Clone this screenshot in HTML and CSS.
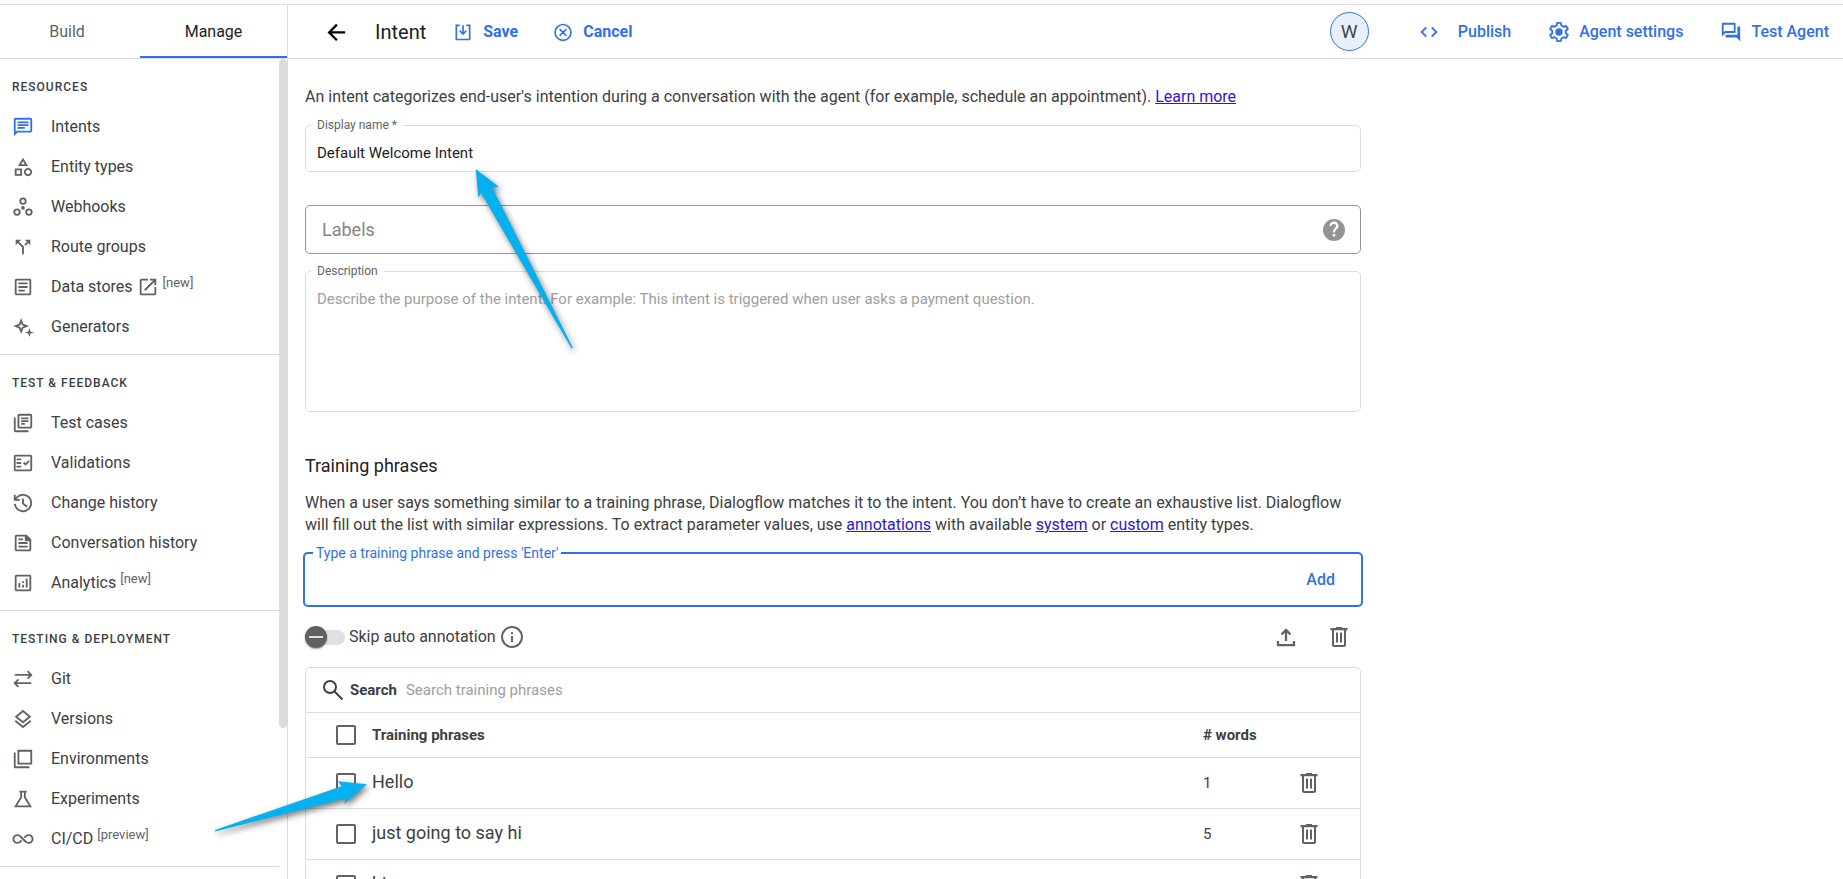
FILE: index.html
```html
<!DOCTYPE html>
<html lang="en">
  <head>
    <meta charset="UTF-8" />
    <meta name="viewport" content="width=device-width, initial-scale=1.0" />
    <title>Intent</title>
    <link rel="stylesheet" href="styles.css">
  </head>
  <body>
    <svg class="sprite" aria-hidden="true">
      <symbol id="trash" viewBox="0 0 24 24">
        <path d="M15 3V2H9v1H3.500v2.300H5V20c0 1.100.9 2 2 2h10c1.100 0 2-.9 2-2V5.300h1.500V3H15zm2 17H7V5.300h10V20zM9 7.500h2v10H9zm4 0h2v10h-2z" />
      </symbol>
    </svg>

    <aside class="sidebar">
      <nav class="tabs">
        <a href="#build" class="tabs__item">Build</a>
        <a href="#manage" class="tabs__item tabs__item--active">Manage</a>
      </nav>
      <div class="sidebar__body">
        <nav class="menu">
          <section class="menu__section">
            <h2 class="menu__title">Resources</h2>
            <a href="#intents" class="menu__item menu__item--active">
              <svg class="icon" viewBox="0 0 24 24"><path d="M4 4h16v12H5.170L4 17.170V4m0-2c-1.100 0-1.990.9-1.990 2L2 22l4-4h14c1.100 0 2-.9 2-2V4c0-1.100-.9-2-2-2H4zm2 10h8v2H6v-2zm0-3h12v2H6V9zm0-3h12v2H6V6z" /></svg>
              <span>Intents</span>
            </a>
            <a href="#entities" class="menu__item">
              <svg class="icon" viewBox="0 0 24 24"><path d="M12 2l-5.500 9h11L12 2zm0 3.840L13.930 9h-3.870L12 5.840zM17.500 13c-2.490 0-4.500 2.010-4.500 4.500s2.010 4.500 4.500 4.500 4.500-2.010 4.500-4.500-2.010-4.500-4.500-4.500zm0 7c-1.380 0-2.500-1.120-2.500-2.500s1.120-2.500 2.500-2.500 2.500 1.120 2.500 2.500-1.120 2.500-2.500 2.500zM3 21.500h8v-8H3v8zm2-6h4v4H5v-4z" /></svg>
              <span>Entity types</span>
            </a>
            <a href="#webhooks" class="menu__item">
              <svg class="icon" viewBox="0 0 24 24"><g fill="none" stroke="currentColor" stroke-width="2"><circle cx="12" cy="5.500" r="3" /><circle cx="5.500" cy="17.500" r="3" /><circle cx="18.500" cy="17.500" r="3" /></g><circle cx="12" cy="13" r="2" /></svg>
              <span>Webhooks</span>
            </a>
            <a href="#routes" class="menu__item">
              <svg class="icon" viewBox="0 0 24 24"><path d="M14 4l2.290 2.290-2.880 2.880 1.420 1.420 2.880-2.880L20 10V4zM10 4H4v6l2.290-2.290 4.710 4.700V20h2v-8.410l-5.290-5.300z" /></svg>
              <span>Route groups</span>
            </a>
            <a href="#stores" class="menu__item">
              <svg class="icon" viewBox="0 0 24 24"><path d="M19 5v14H5V5h14m0-2H5c-1.100 0-2 .9-2 2v14c0 1.100.9 2 2 2h14c1.100 0 2-.9 2-2V5c0-1.100-.9-2-2-2zM14 17H7v-2h7v2zm3-4H7v-2h10v2zm0-4H7V7h10v2z" /></svg>
              <span>Data stores</span>
              <svg class="icon icon--link" viewBox="0 0 24 24"><path d="M19 19H5V5h7V3H5c-1.110 0-2 .9-2 2v14c0 1.100.89 2 2 2h14c1.100 0 2-.9 2-2v-7h-2v7zM14 3v2h3.590l-9.830 9.830 1.410 1.410L19 6.410V10h2V3h-7z" /></svg>
              <small class="menu__tag">[new]</small>
            </a>
            <a href="#generators" class="menu__item">
              <svg class="icon" viewBox="0 0 24 24"><path fill="none" stroke="currentColor" stroke-width="2" stroke-linejoin="miter" d="M10 5l1.700 4.300L16 11l-4.300 1.700L10 17l-1.700-4.300L4 11l4.300-1.700z" /><path d="M19 13l1.200 3.800L24 18l-3.800 1.200L19 23l-1.200-3.800L14 18l3.800-1.200z" /></svg>
              <span>Generators</span>
            </a>
          </section>

          <section class="menu__section">
            <h2 class="menu__title">Test &amp; Feedback</h2>
            <a href="#tests" class="menu__item">
              <svg class="icon" viewBox="0 0 24 24"><path d="M4 6H2v14c0 1.100.9 2 2 2h14v-2H4V6zm16-4H8c-1.100 0-2 .9-2 2v12c0 1.100.9 2 2 2h12c1.100 0 2-.9 2-2V4c0-1.100-.9-2-2-2zm0 14H8V4h12v12zM10 9h8v2h-8zm0 3h4v2h-4zm0-6h8v2h-8z" /></svg>
              <span>Test cases</span>
            </a>
            <a href="#validations" class="menu__item">
              <svg class="icon" viewBox="0 0 24 24"><path d="M20 3H4c-1.100 0-2 .9-2 2v14c0 1.100.9 2 2 2h16c1.100 0 2-.9 2-2V5c0-1.100-.9-2-2-2zm0 16H4V5h16v14zM19.410 10.420L17.990 9l-3.170 3.170-1.410-1.420L12 12.160 14.820 15zM5 7h5v2H5zm0 4h5v2H5zm0 4h5v2H5z" /></svg>
              <span>Validations</span>
            </a>
            <a href="#changes" class="menu__item">
              <svg class="icon" viewBox="0 0 24 24"><path fill="none" stroke="currentColor" stroke-width="2" d="M3 13a9 9 0 1 0 2.600-7.400L3 8.200M3 3v5.500h5.500M12 7v5.500l4.500 3.500" /></svg>
              <span>Change history</span>
            </a>
            <a href="#conversations" class="menu__item">
              <svg class="icon" viewBox="0 0 24 24"><path d="M16 3H5c-1.100 0-2 .9-2 2v14c0 1.100.9 2 2 2h14c1.100 0 2-.9 2-2V8l-5-5zm3 16H5V5h9v5h5v9zM7 17h10v-2H7v2zm5-10H7v2h5V7zm-5 6h10v-2H7v2z" /></svg>
              <span>Conversation history</span>
            </a>
            <a href="#analytics" class="menu__item">
              <svg class="icon" viewBox="0 0 24 24"><path d="M19 3H5c-1.100 0-2 .9-2 2v14c0 1.100.9 2 2 2h14c1.100 0 2-.9 2-2V5c0-1.100-.9-2-2-2zm0 16H5V5h14v14zM7 12h2v5H7zm8-5h2v10h-2zm-4 7h2v3h-2zm0-4h2v2h-2z" /></svg>
              <span>Analytics</span>
              <small class="menu__tag">[new]</small>
            </a>
          </section>

          <section class="menu__section">
            <h2 class="menu__title">Testing &amp; Deployment</h2>
            <a href="#git" class="menu__item">
              <svg class="icon" viewBox="0 0 24 24"><path fill="none" stroke="currentColor" stroke-width="2" d="M3 7.500h18M17 3.500l4 4-4 4M21 16.500H3M7 12.500l-4 4 4 4" /></svg>
              <span>Git</span>
            </a>
            <a href="#versions" class="menu__item">
              <svg class="icon" viewBox="0 0 24 24"><path fill="none" stroke="currentColor" stroke-width="2" d="M12 3.300L19.500 9.500 12 15.500 4.500 9.500zM3.500 14l8.500 6.700 8.500-6.700" /></svg>
              <span>Versions</span>
            </a>
            <a href="#environments" class="menu__item">
              <svg class="icon" viewBox="0 0 24 24"><path fill="none" stroke="currentColor" stroke-width="2" d="M7 3h14v14H7zM3 5v16h16" /></svg>
              <span>Environments</span>
            </a>
            <a href="#experiments" class="menu__item">
              <svg class="icon" viewBox="0 0 24 24"><path fill="none" stroke="currentColor" stroke-width="2" d="M8 4h8M10 4v6l-6 10h16l-6-10V4" /></svg>
              <span>Experiments</span>
            </a>
            <a href="#cicd" class="menu__item">
              <svg class="icon" viewBox="0 0 24 24"><path fill="none" stroke="currentColor" stroke-width="2" d="M10.500 13.500l-1.300 1.200a4.300 4.300 0 1 1 0-5.400l5.600 5.400a4.300 4.300 0 1 0 0-5.400l-1.300 1.200" /></svg>
              <span>CI/CD</span>
              <small class="menu__tag">[preview]</small>
            </a>
          </section>
        </nav>
        <div class="scrollbar"></div>
      </div>
    </aside>

    <div class="page">
      <header class="toolbar">
        <button type="button" class="toolbar__back" aria-label="Back">
          <svg class="icon" viewBox="0 0 24 24"><path fill="none" stroke="currentColor" stroke-width="2.500" d="M22 12.500H5M13 4l-8.500 8.500L13 21" /></svg>
        </button>
        <h1 class="toolbar__title">Intent</h1>
        <button type="button" class="action action--strong">
          <svg class="icon" viewBox="0 0 24 24"><path fill="none" stroke="currentColor" stroke-width="2" d="M8 4H4v17h16V4h-4M12 4v10M8 10.500l4 4 4-4" /></svg>
          Save
        </button>
        <button type="button" class="action action--strong action--cancel">
          <svg class="icon" viewBox="0 0 24 24"><path fill="none" stroke="currentColor" stroke-width="2" d="M12 3a9.500 9.500 0 1 0 0 19 9.500 9.500 0 0 0 0-19zM8 8.500l8 8M16 8.500l-8 8" /></svg>
          Cancel
        </button>
        <span class="avatar">W</span>
        <div class="toolbar__links">
          <button type="button" class="action action--publish">
            <svg class="icon" viewBox="0 0 24 24"><path fill="none" stroke="currentColor" stroke-width="2" d="M9 7l-5 5 5 5M15 7l5 5-5 5" /></svg>
            Publish
          </button>
          <button type="button" class="action">
            <svg class="icon" viewBox="0 0 24 24"><path fill="none" stroke="currentColor" stroke-width="2" stroke-linejoin="round" d="M10 2h4l.6 3 2.200 1.300 2.900-1 2 3.400L19.400 10.700v2.600l2.300 2-2 3.400-2.900-1L14.600 19l-.6 3h-4l-.6-3-2.200-1.300-2.900 1-2-3.400 2.300-2v-2.600l-2.300-2 2-3.400 2.900 1L9.400 5z" /><circle cx="12" cy="12" r="4" /></svg>
            Agent settings
          </button>
          <button type="button" class="action">
            <svg class="icon" viewBox="0 0 24 24"><path d="M15 4v7H5.170L4 12.170V4h11m1-2H3c-.55 0-1 .45-1 1v14l4-4h10c.55 0 1-.45 1-1V3c0-.55-.45-1-1-1zm5 4h-2v9H6v2c0 .55.45 1 1 1h11l4 4V7c0-.55-.45-1-1-1z" /></svg>
            Test Agent
          </button>
        </div>
      </header>

      <main class="content">
        <p class="text">
          An intent categorizes end-user's intention during a conversation with the agent (for example, schedule an appointment). <a href="#learn">Learn more</a>
        </p>

        <div class="field">
          <label class="field__label" for="name">Display name *</label>
          <input class="field__input" type="text" id="name" value="Default Welcome Intent" />
        </div>

        <div class="labels">
          <input class="labels__input" type="text" placeholder="Labels" aria-label="Labels" />
          <svg class="labels__help" viewBox="0 0 24 24"><path d="M12 1a11 11 0 1 0 0 22 11 11 0 0 0 0-22zm1.200 17.500h-2.400v-2.400h2.400zm2.300-8l-1.100 1.100c-.8.800-1.200 1.400-1.200 2.900h-2.400v-.6c0-1.200.5-2.200 1.200-3l1.400-1.400a2.100 2.100 0 1 0-3.600-1.500H7.500a4.500 4.500 0 0 1 9 0c0 1-.4 1.900-1 2.500z" /></svg>
        </div>

        <div class="field">
          <label class="field__label" for="description">Description</label>
          <textarea class="field__input field__input--area" id="description" placeholder="Describe the purpose of the intent. For example: This intent is triggered when user asks a payment question."></textarea>
        </div>

        <h2 class="heading">Training phrases</h2>
        <p class="text">
          When a user says something similar to a training phrase, Dialogflow matches it to the intent. You don’t have to create an exhaustive list. Dialogflow will fill out the list with similar expressions. To extract parameter values, use <a href="#annotations">annotations</a> with available <a href="#system">system</a> or <a href="#custom">custom</a> entity types.
        </p>

        <div class="phrase">
          <label class="phrase__label" for="phrase">Type a training phrase and press 'Enter'</label>
          <input class="phrase__input" type="text" id="phrase" />
          <button type="button" class="phrase__add">Add</button>
        </div>

        <div class="options">
          <input class="switch" type="checkbox" id="skip" />
          <label class="options__label" for="skip">Skip auto annotation</label>
          <svg class="options__info" viewBox="0 0 24 24"><path fill="none" stroke="currentColor" stroke-width="2" d="M12 2a10 10 0 1 0 0 20 10 10 0 0 0 0-20zM12 11v6M12 7v2" /></svg>
          <div class="options__tools">
            <button type="button" class="tool" aria-label="Upload">
              <svg viewBox="0 0 24 24"><path fill="none" stroke="currentColor" stroke-width="2.300" d="M12 16V5.500M7.500 9.500L12 5l4.500 4.500M4 16v4.200h16V16" /></svg>
            </button>
            <button type="button" class="tool" aria-label="Delete"><svg viewBox="0 0 24 24"><use href="#trash" /></svg></button>
          </div>
        </div>

        <div class="phrases">
          <div class="search">
            <svg class="search__icon" viewBox="0 0 24 24"><path fill="none" stroke="currentColor" stroke-width="2" d="M9 3a6 6 0 1 0 0 12A6 6 0 0 0 9 3zM13.500 13.500l8 8" /></svg>
            <label class="search__label" for="search">Search</label>
            <input class="search__input" type="text" id="search" placeholder="Search training phrases" />
          </div>
          <table class="table">
            <thead>
              <tr>
                <th class="table__check"><input class="check" type="checkbox" aria-label="Select all" /></th>
                <th>Training phrases</th>
                <th class="table__words"># words</th>
                <th class="table__tools"></th>
              </tr>
            </thead>
            <tbody>
              <tr>
                <td class="table__check"><input class="check" type="checkbox" aria-label="Select Hello" /></td>
                <td class="table__phrase">Hello</td>
                <td>1</td>
                <td class="table__tools"><button type="button" class="tool" aria-label="Delete"><svg viewBox="0 0 24 24"><use href="#trash" /></svg></button></td>
              </tr>
              <tr>
                <td class="table__check"><input class="check" type="checkbox" aria-label="Select just going to say hi" /></td>
                <td class="table__phrase">just going to say hi</td>
                <td>5</td>
                <td class="table__tools"><button type="button" class="tool" aria-label="Delete"><svg viewBox="0 0 24 24"><use href="#trash" /></svg></button></td>
              </tr>
              <tr>
                <td class="table__check"><input class="check" type="checkbox" aria-label="Select hi" /></td>
                <td class="table__phrase">hi</td>
                <td>1</td>
                <td class="table__tools"><button type="button" class="tool" aria-label="Delete"><svg viewBox="0 0 24 24"><use href="#trash" /></svg></button></td>
              </tr>
            </tbody>
          </table>
        </div>
      </main>
    </div>

    <svg class="arrows" aria-hidden="true">
      <path d="M475.700 169l23 17.700-6.400 1L573 348l-1.500.5L481.300 193.300l-3 4z" />
      <path d="M367 784.300l-22.700 19.400 1.400-5.400L215 831.500v-1.500l126.700-43.700-4-5z" />
    </svg>
  </body>
</html>
```

FILE: styles.css
```css
:root {
  --blue: #3071e7;
  --text: #3c4043;
  --muted: #5f6368;
  --line: #dadce0;
}
*,
*::before,
*::after {
  box-sizing: border-box;
}
body {
  display: flex;
  position: relative;
  height: 100vh;
  margin: 0;
  padding-top: 4px;
  overflow: hidden;
  color: var(--text);
  font: 15px/22px Roboto, sans-serif;
  background: white;
}
h1,
h2,
p {
  margin: 0;
}
button,
input,
textarea {
  margin: 0;
  padding: 0;
  border: 0;
  outline: 0;
  color: inherit;
  font: inherit;
  background: none;
}
button {
  cursor: pointer;
}
svg {
  fill: currentColor;
}
.sprite {
  display: none;
}
.icon {
  flex: none;
  width: 22px;
  height: 22px;
}

/* Sidebar */
.sidebar {
  display: flex;
  flex: none;
  flex-direction: column;
  width: 288px;
  border-top: 1px solid var(--line);
  border-right: 1px solid var(--line);
}
.tabs {
  display: flex;
  flex: none;
  height: 54px;
  border-bottom: 1px solid var(--line);
}
.tabs__item {
  width: 140px;
  padding-right: 6px;
  color: var(--muted);
  font-size: 16px;
  line-height: 54px;
  text-align: center;
  text-decoration: none;
}
.tabs__item--active {
  flex: 1;
  padding: 0;
  color: #202124;
  border-bottom: 2px solid var(--blue);
}
.sidebar__body {
  display: flex;
  flex: 1;
  min-height: 0;
}
.menu {
  flex: 1;
  overflow: hidden;
}
.scrollbar {
  width: 8px;
  height: 81.6%;
  border-radius: 4px;
  background: var(--line);
}
.menu__section {
  padding: 12px 0 7px;
  border-bottom: 1px solid var(--line);
}
.menu__title {
  margin-bottom: 4px;
  padding-left: 12px;
  font-size: 12px;
  font-weight: 500;
  letter-spacing: 1px;
  line-height: 32px;
  text-transform: uppercase;
}
.menu__item {
  display: flex;
  align-items: center;
  height: 40px;
  padding-left: 12px;
  color: var(--text);
  font-size: 16px;
  text-decoration: none;
}
.menu__item .icon {
  color: var(--muted);
}
.menu__item > .icon:first-child {
  margin-right: 17px;
}
.menu__item--active .icon {
  color: var(--blue);
}
.menu__item .icon--link {
  margin-left: 4px;
}
.menu__tag {
  margin-left: 4px;
  padding-bottom: 8px;
  color: var(--muted);
  font-size: 13px;
}

/* Toolbar */
.page {
  flex: 1;
  min-width: 0;
  border-top: 1px solid var(--line);
}
.toolbar {
  display: flex;
  align-items: center;
  height: 54px;
  padding: 0 14px 0 37px;
  border-bottom: 1px solid var(--line);
}
.toolbar__back {
  display: flex;
  color: black;
}
.toolbar__title {
  margin: 0 27px 0 28px;
  color: #202124;
  font-size: 20px;
  font-weight: 400;
}
.action {
  display: flex;
  align-items: center;
  gap: 9px;
  color: var(--blue);
  font-size: 16px;
  font-weight: 500;
}
.action--strong {
  gap: 10px;
  font-weight: 700;
}
.action--strong .icon {
  width: 20px;
  height: 20px;
}
.action--cancel {
  margin-left: 35px;
}
.action--publish {
  gap: 18px;
}
.avatar {
  width: 39px;
  height: 39px;
  margin-left: auto;
  border: 1px solid var(--blue);
  border-radius: 50%;
  color: #3c4a43;
  font-size: 19px;
  line-height: 38px;
  text-align: center;
  background: #e8f0fe;
}
.toolbar__links {
  display: flex;
  gap: 37px;
  margin-left: 49px;
}

/* Form */
.content {
  max-width: 1090px;
  padding: 27px 17px 0;
}
.text {
  font-size: 16px;
}
.text a {
  color: #3311dd;
}
.field {
  position: relative;
  margin-top: 17px;
}
.field__label {
  position: absolute;
  top: -10px;
  left: 6px;
  padding: 0 6px;
  color: var(--muted);
  font-size: 12px;
  line-height: 20px;
  background: white;
}
.field__input {
  display: block;
  width: 100%;
  height: 47px;
  padding: 8px 11px 0;
  border: 1px solid var(--line);
  border-radius: 5px;
  color: #202124;
}
.field__input--area {
  height: 141px;
  padding-top: 16px;
  resize: none;
}
::placeholder {
  color: #9e9e9e;
  opacity: 1;
}
.labels {
  display: flex;
  align-items: center;
  height: 49px;
  margin-top: 33px;
  padding: 0 14px 0 16px;
  border: 1px solid #949494;
  border-radius: 5px;
}
.labels__input {
  flex: 1;
  font-size: 18px;
}
.labels__input::placeholder {
  color: #858585;
}
.labels__help {
  width: 24px;
  height: 24px;
  color: #949494;
}
.heading {
  margin: 42px 0 14px;
  color: #202124;
  font-size: 18px;
  font-weight: 400;
  line-height: 24px;
}
.phrase {
  display: flex;
  position: relative;
  height: 55px;
  margin: 16px -2px 0;
  border: 2px solid var(--blue);
  border-radius: 5px;
}
.phrase__label {
  position: absolute;
  top: -12px;
  left: 8px;
  padding: 0 3px;
  color: var(--blue);
  font-size: 14px;
  background: white;
}
.phrase__input {
  flex: 1;
  padding: 0 12px;
}
.phrase__add {
  padding: 0 26px;
  color: var(--blue);
  font-size: 16px;
  font-weight: 500;
}
.options {
  display: flex;
  align-items: center;
  height: 60px;
  gap: 4px;
}
.options__label {
  font-size: 16px;
}
.switch {
  position: relative;
  width: 40px;
  height: 15px;
  border-radius: 8px;
  background: #e0e0e0;
  appearance: none;
}
.switch::before {
  content: "";
  position: absolute;
  top: -4px;
  left: 0;
  width: 22px;
  height: 22px;
  border-radius: 50%;
  background: linear-gradient(#e0e0e0, #e0e0e0) center / 14px 2px no-repeat #616161;
  box-shadow: 0 1px 2px #0006;
}
.options__info {
  width: 24px;
  height: 24px;
  color: var(--muted);
}
.options__tools {
  display: flex;
  gap: 29px;
  margin-left: auto;
  padding-right: 10px;
}
.tool {
  display: block;
  color: var(--muted);
}
.tool svg {
  display: block;
  width: 24px;
  height: 24px;
}

/* Training phrases */
.phrases {
  border: 1px solid var(--line);
  border-radius: 5px;
}
.search {
  display: flex;
  align-items: center;
  height: 44px;
  padding-left: 15px;
}
.search__icon {
  width: 24px;
  height: 24px;
  margin-right: 5px;
}
.search__label,
.table th {
  font-weight: 700;
  text-align: left;
}
.search__input {
  flex: 1;
  margin-left: 9px;
}
.table {
  width: 100%;
  border-spacing: 0;
}
.table th,
.table td {
  height: 51px;
  padding: 0;
  border-top: 1px solid var(--line);
}
.table th {
  height: 45px;
}
.table .table__check {
  width: 66px;
  padding-left: 30px;
}
.table .table__phrase {
  padding-bottom: 2px;
  font-size: 18px;
}
.table__words {
  width: 94px;
}
.table .table__tools {
  width: 63px;
}
.check {
  display: block;
  width: 20px;
  height: 20px;
  border: 2px solid var(--muted);
  border-radius: 2px;
  appearance: none;
}

/* Pointers drawn over the page */
.arrows {
  position: absolute;
  top: 0;
  left: 0;
  width: 100%;
  height: 100%;
  fill: #05b0f0;
  filter: drop-shadow(2px 3px 3px #0008);
  pointer-events: none;
}
```
